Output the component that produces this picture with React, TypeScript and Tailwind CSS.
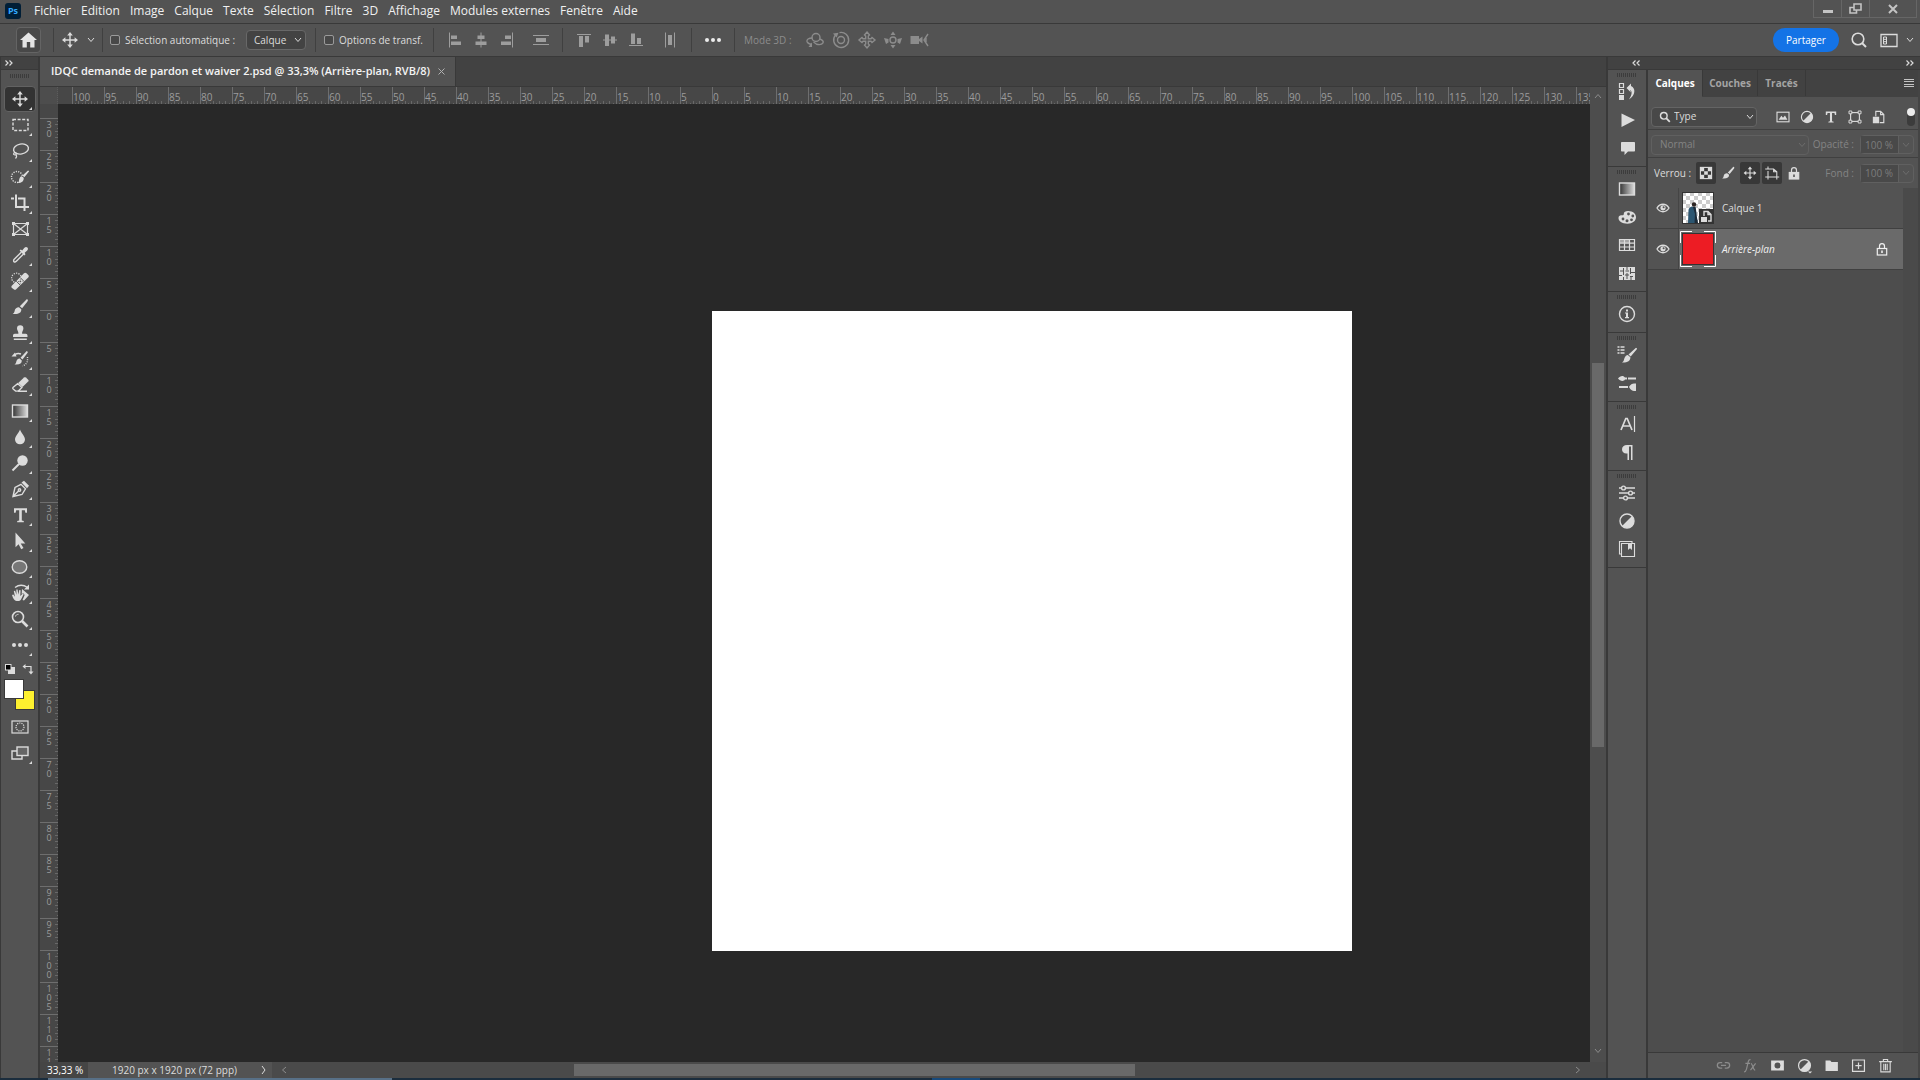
import React from "react";

type IconProps = { children: React.ReactNode; size?: number; className?: string };

const Icon = ({ children, size = 20, className = "" }: IconProps) => (
  <svg
    width={size}
    height={size}
    viewBox="0 0 20 20"
    fill="none"
    stroke="currentColor"
    strokeWidth="1.4"
    className={`shrink-0 ${className}`}
    aria-hidden="true"
  >
    {children}
  </svg>
);

const solid = { fill: "currentColor", stroke: "none" };

const Chevron = ({ className = "" }: { className?: string }) => (
  <svg width="8" height="6" viewBox="0 0 8 6" fill="none" stroke="currentColor" className={`shrink-0 ${className}`} aria-hidden="true">
    <path d="M1 1l3 3.5L7 1" />
  </svg>
);

const Grip = () => (
  <svg width="20" height="4" viewBox="0 0 20 4" className="shrink-0 text-[#3c3c3c]" stroke="currentColor" aria-hidden="true">
    <path d="M.5 0v4M2.5 0v4M4.5 0v4M6.5 0v4M8.5 0v4M10.5 0v4M12.5 0v4M14.5 0v4M16.5 0v4M18.5 0v4" />
  </svg>
);

const DoubleChevron = ({ flip = false }: { flip?: boolean }) => (
  <svg width="8" height="6" viewBox="0 0 8 6" fill="none" stroke="currentColor" className={flip ? "rotate-180" : ""} aria-hidden="true">
    <path d="M.5.5L3 3 .5 5.5M4.5.5L7 3 4.5 5.5" strokeWidth="1.2" />
  </svg>
);

// ---- drawings shared by several bars ----
const moveShape = (
  <>
    <path d="M10 4v12M4 10h12" />
    <path {...solid} d="M10 2l2.8 3.4H7.2zM10 18l2.8-3.4H7.2zM2 10l3.4-2.8v5.6zM18 10l-3.4-2.8v5.6z" />
  </>
);
const brushShape = (
  <path {...solid} d="M17.5 2.5c.8.7.3 1.6-.4 2.6l-5 6.2-2.3-2 5.7-5.9c.7-.7 1.4-1.4 2-.9zM9 10.2l2.3 2c.2 3.6-2.8 5.3-8.6 4.7 2-1 1.600-2.300 2.300-4.300C5.700 10.900 7.300 10 9 10.200z" />
);
const gradientShape = (id: string) => (
  <>
    <defs>
      <linearGradient id={id}>
        <stop offset="0" stopColor="#333" />
        <stop offset="1" stopColor="#ddd" />
      </linearGradient>
    </defs>
    <rect x="2.5" y="4" width="15" height="12" fill={`url(#${id})`} />
  </>
);
const halfCircle = (
  <>
    <circle cx="10" cy="10" r="7" />
    <path {...solid} d="M15 5a7 7 0 0 1-10 10z" />
  </>
);
const serifT = <path {...solid} d="M3.500 3h13v4.500h-1.600l-.6-2.500h-3v10.300l2 .5V17H6.700v-1.200l2-.5V5h-3l-.6 2.500H3.500z" />;

const tools: { name: string; shape: React.ReactNode; plain?: boolean }[] = [
  { name: "Déplacement", shape: moveShape },
  { name: "Rectangle de sélection", shape: <rect x="3" y="4.500" width="15" height="11" strokeDasharray="3 1.600" /> },
  {
    name: "Lasso",
    shape: (
      <>
        <ellipse cx="11" cy="8" rx="7.500" ry="5" transform="rotate(-10 11 8)" />
        <path d="M5 11.500c-2 .5-1.800 2.500 0 2.400 2-.1 1.800-2.400 0-2.400M6 13.500c1 1.500.5 3-.5 4" strokeWidth="1.200" />
      </>
    ),
  },
  {
    name: "Sélection rapide",
    shape: (
      <>
        <circle cx="7" cy="10" r="5.500" strokeDasharray="1.200 1.200" />
        <path {...solid} d="M19 4l-1-.5-5.500 5 1.800 1.700L19 4.500zM11.800 9.300l1.900 1.700c.3 3-2 5-6.200 5 1.800-1 1.300-2.500 1.800-4 .4-1.600 1.300-2.500 2.500-2.700z" />
      </>
    ),
  },
  { name: "Recadrage", shape: <path d="M6 1.500V14h10M1 5.500h3M8 5.500h6.500V18M16 14h3" strokeWidth="2" /> },
  {
    name: "Image",
    plain: true,
    shape: (
      <>
        <path d="M3.500 4.500h14v11h-14zM3.500 4.500l14 11M17.500 4.500l-14 11" strokeWidth="1.200" />
        <path {...solid} d="M2 3h3v3H2zM16 3h3v3h-3zM2 14h3v3H2zM16 14h3v3h-3z" />
      </>
    ),
  },
  {
    name: "Pipette",
    shape: (
      <>
        <path d="M11.500 7L4.200 14.300c-.8.8-.7 2-.2 2.400.5.5 1.600.4 2.300-.4L13.500 9" />
        <path {...solid} d="M9.600 5.600l1.200-1 1.400.8 2-2.400c1.200-1.300 2.400-1.200 3.200-.4s.9 2-.4 3.200l-2.300 2 .8 1.500-1.200 1.200z" />
      </>
    ),
  },
  {
    name: "Correcteur localisé",
    shape: (
      <>
        <circle cx="6.500" cy="7" r="4.800" strokeDasharray="1.200 1.200" strokeWidth="1.200" />
        <path {...solid} d="M2 14.500l12-12.300c.8-.7 1.700-.7 2.500 0l1.700 1.700c.8.800.8 1.700 0 2.500l-12 11.800c-.8.800-1.700.8-2.500 0L2 17c-.8-.8-.8-1.700 0-2.500z" />
        <path d="M6.300 10.200l4.300 4.300M10 6.400l4.300 4.300" stroke="#535353" strokeWidth="1" />
        <path d="M10.300 8.500v4M8.300 10.500h4" stroke="#535353" strokeWidth="1" strokeDasharray="1 .8" />
      </>
    ),
  },
  { name: "Pinceau", shape: brushShape },
  {
    name: "Tampon de duplication",
    shape: <path {...solid} d="M7 5.500a3.200 3.200 0 1 1 6.400 0c0 2-1.600 2.700-1.300 5.300h3.600c1.200 0 1.800.7 1.800 2v1.200H3v-1.200c0-1.300.6-2 1.800-2h3.600C8.700 8.200 7 7.500 7 5.500zM3.800 15.500h13V17h-13z" />,
  },
  {
    name: "Forme d'historique",
    shape: (
      <>
        <path {...solid} d="M17.500 2.500l-.8-.5-6.200 6.700 2 1.800 5.300-7zM9.700 9.500l2.100 2c.2 3-2.300 4.500-7.300 4 1.600-.8 1.500-2 2-3.500.5-1.600 1.700-2.600 3.200-2.500zM1.500 7.500L5 3.500l1.500 4z" />
        <path d="M5 5.500c2-1.300 4-1.300 6-.5" />
        <path d="M17.500 8v3c0 2.500-2 5-5 6" strokeDasharray="1 1.200" />
      </>
    ),
  },
  {
    name: "Gomme",
    shape: (
      <>
        <path {...solid} d="M8.200 8L14 2.500c.6-.5 1.300-.5 1.900 0l2.300 2.200c.6.600.6 1.300 0 1.900L12.500 12z" />
        <path d="M7.600 8.600l4.300 4-3 2.900c-.5.500-1 .6-1.700.6H5.600L3.200 14c-.6-.6-.6-1.300 0-1.800zM8 16.300h9" />
      </>
    ),
  },
  { name: "Dégradé", shape: gradientShape("toolGrad") },
  { name: "Goutte d'eau", shape: <path {...solid} d="M10 2.500c1 3.500 5 6.500 5 10a5 4.800 0 0 1-10 0c0-3.500 4-6.500 5-10z" /> },
  {
    name: "Densité -",
    shape: (
      <>
        <circle {...solid} cx="12.500" cy="7.500" r="5.200" />
        <path d="M9 11l-6.500 6.500" strokeWidth="2" />
      </>
    ),
  },
  {
    name: "Plume",
    shape: (
      <>
        <path d="M3 17.500l2-9 6-3.200 4.500 4.500-3.500 5.700zM3.500 17l5.500-5.500" />
        <circle cx="9.500" cy="11" r="1.200" />
        <path {...solid} d="M11.500 3.500l2.500-1.700 5 5L17 9.300z" />
      </>
    ),
  },
  { name: "Texte horizontal", shape: <g transform="translate(.5 .3)">{serifT}</g> },
  { name: "Sélection de tracé", shape: <path {...solid} d="M5.500 1.500l9.800 11h-4.600l2.800 4.600-2.300 1.100-2.600-4.900-3.100 3z" /> },
  { name: "Ellipse", shape: <ellipse cx="9.500" cy="10" rx="7.300" ry="6.300" fill="#777" /> },
  {
    name: "Rotation de l'affichage",
    shape: (
      <>
        <path {...solid} d="M6.500 18c-2 0-3.500-2.500-4.500-6l1.300-.5L5 13.700 3.800 8l1.300-.3 1.400 4-.2-5.200h1.300l.7 5 1-4.500 1.300.2-.3 5.800 1.700-1.800c1-.8 1.800-.3 1.500.4L11 16.500c-.7 1-1.800 1.500-3 1.500z" />
        <path {...solid} d="M12 6l7 6-5 5.500-1.500-.6 2-4.500c0-2-1.500-2.300-2.800-1.400z" />
        <path d="M5 4.500c4-3 9-2.500 12.500 0" />
        <path {...solid} d="M19 1.500v5h-5z" />
      </>
    ),
  },
  {
    name: "Zoom",
    shape: (
      <>
        <circle cx="8" cy="8" r="5.500" strokeWidth="1.600" />
        <path d="M5.500 7.500C5.800 6 7 5.300 8.500 5.300" strokeWidth="1" />
        <path d="M12 12l5.500 5.500" strokeWidth="2.600" />
      </>
    ),
  },
  {
    name: "Modifier la barre d'outils",
    shape: (
      <g {...solid}>
        <circle cx="4" cy="10" r="2" />
        <circle cx="10" cy="10" r="2" />
        <circle cx="16" cy="10" r="2" />
      </g>
    ),
  },
];

const ToolButton = ({ name, active, plain, children }: { name: string; active?: boolean; plain?: boolean; children: React.ReactNode }) => (
  <button
    type="button"
    aria-label={name}
    className={`flex h-[26px] w-8 shrink-0 items-center justify-center rounded-sm text-[#dcdcdc] ${
      active ? "border border-[#626262] bg-[#333]" : ""
    }`}
  >
    <span className="relative flex">
      <Icon>{children}</Icon>
      {!plain && (
        <svg width="3" height="3" viewBox="0 0 3 3" className="absolute -right-0.5 -bottom-px" aria-hidden="true">
          <path d="M3 0v3H0z" fill="currentColor" />
        </svg>
      )}
    </span>
  </button>
);

const Toolbox = () => (
  <aside className="flex w-10 shrink-0 flex-col border-r-2 border-l border-[#393939] bg-[#535353]">
    <div className="flex h-[13px] shrink-0 items-center border-b border-[#393939] bg-[#424242] pl-1 text-[#dcdcdc]">
      <DoubleChevron />
    </div>
    <div className="flex h-4 shrink-0 items-start justify-center pt-1">
      <Grip />
    </div>
    <div className="flex flex-col items-center">
      {tools.map((tool, i) => (
        <ToolButton key={tool.name} name={tool.name} active={i === 0} plain={tool.plain}>
          {tool.shape}
        </ToolButton>
      ))}
    </div>
    <div className="flex h-[21px] shrink-0 items-center justify-between pr-1 pl-[3px] text-[#dcdcdc]">
      <button type="button" aria-label="Couleurs par défaut">
        <svg width="12" height="12" viewBox="0 0 12 12">
          <rect x="4" y="4" width="7" height="7" fill="#dcdcdc" />
          <rect x="1.500" y="1.500" width="5.500" height="5.500" fill="#000" stroke="#dcdcdc" />
        </svg>
      </button>
      <button type="button" aria-label="Permuter les couleurs">
        <svg width="12" height="12" viewBox="0 0 12 12" fill="none" stroke="currentColor" strokeWidth="1.200">
          <path d="M3 3.500h6v6" />
          <path d="M3.500 1v5L.5 3.500zM6.500 8.500h5L9 11.500z" fill="currentColor" stroke="none" />
        </svg>
      </button>
    </div>
    <div className="relative h-[35px] shrink-0">
      <button type="button" aria-label="Couleur d'arrière-plan" className="absolute top-[11px] left-3.5 h-5 w-5 border border-[#393939] bg-[#fdf02f]" />
      <button type="button" aria-label="Couleur de premier plan" className="absolute top-0 left-[3px] h-5 w-5 border border-[#393939] bg-white" />
    </div>
    <div className="flex flex-col items-center">
      <ToolButton name="Mode masque" plain>
        <rect x="2" y="4" width="16" height="12" strokeWidth="1.200" />
        <circle cx="10" cy="10" r="4" strokeDasharray="1.200 1" strokeWidth="1.200" />
      </ToolButton>
      <ToolButton name="Mode d'écran">
        <path d="M7 8H2v8h10v-3" />
        <rect x="7" y="4" width="11" height="8.500" fill="#666" />
      </ToolButton>
    </div>
  </aside>
);

const menus = ["Fichier", "Edition", "Image", "Calque", "Texte", "Sélection", "Filtre", "3D", "Affichage", "Modules externes", "Fenêtre", "Aide"];

const MenuBar = () => (
  <header className="flex h-6 shrink-0 items-start border-b border-[#393939] bg-[#535353] pl-[5px]">
    <div className="mt-[3px] flex h-4 w-4 items-center justify-center rounded-[3px] bg-[#001e36] text-[9px] font-bold text-[#31a8ff]">Ps</div>
    <nav className="ml-2 flex h-[22px] items-center text-[12px] text-[#f0f0f0]">
      {menus.map((m) => (
        <button type="button" key={m} className="px-[5px]">
          {m}
        </button>
      ))}
    </nav>
    <div className="mr-[3px] ml-auto flex h-[18px] divide-x divide-[#666] border-x border-b border-[#666] text-[#c4c4c4]">
      <button type="button" aria-label="Réduire" className="flex w-7 items-center justify-center">
        <svg width="12" height="12" viewBox="0 0 12 12"><path d="M1 7h10v3H1z" fill="currentColor" /></svg>
      </button>
      <button type="button" aria-label="Restaurer" className="flex w-7 items-center justify-center">
        <svg width="13" height="11" viewBox="0 0 13 11" fill="none" stroke="currentColor" strokeWidth="1.600">
          <path d="M5 1h7v6H5zM5 4.500H1V10h6.500V7" />
        </svg>
      </button>
      <button type="button" aria-label="Fermer" className="flex w-[46px] items-center justify-center">
        <svg width="10" height="10" viewBox="0 0 10 10" stroke="currentColor" strokeWidth="2"><path d="M1 1l8 8M9 1L1 9" /></svg>
      </button>
    </div>
  </header>
);

const Separator = () => <div className="h-6 w-px shrink-0 bg-[#404040]" />;

const BarButton = ({ name, children }: { name: string; children: React.ReactNode }) => (
  <button type="button" aria-label={name} className="flex h-6 w-[26px] shrink-0 items-center justify-center">
    <Icon>{children}</Icon>
  </button>
);

const OptionsBar = () => (
  <div className="flex h-[33px] shrink-0 items-center border-b border-[#393939] bg-[#535353] pr-0.5 pl-4 text-[10px] text-[#dcdcdc]">
    <button type="button" aria-label="Accueil" className="flex h-[26px] w-[25px] items-center justify-center rounded-sm border border-[#646464] bg-[#484848]">
      <svg width="17" height="16" viewBox="0 0 17 16" fill="#e4e4e4"><path d="M8.500.5L17 8h-2.500v7.500h-4.300V10H6.800v5.500H2.500V8H0z" /></svg>
    </button>
    <div className="w-3" />
    <Separator />
    <button type="button" aria-label="Outil actif" className="flex h-6 w-12 items-center gap-[7px] pl-1.5">
      <Icon>{moveShape}</Icon>
      <Chevron />
    </button>
    <Separator />
    <label className="ml-[7px] flex w-[136px] items-center gap-[5px] whitespace-nowrap">
      <input type="checkbox" className="h-2.5 w-2.5 shrink-0 appearance-none rounded-xs border border-[#9a9a9a] bg-[#484848]" />
      Sélection automatique :
    </label>
    <div className="relative flex items-center">
      <select aria-label="Sélection automatique" className="h-5 w-[60px] appearance-none rounded-sm border border-[#686868] bg-[#434343] pl-[7px]">
        <option>Calque</option>
      </select>
      <Chevron className="pointer-events-none absolute right-1" />
    </div>
    <div className="w-[9px]" />
    <Separator />
    <label className="ml-2 flex w-[109px] items-center gap-[5px] whitespace-nowrap">
      <input type="checkbox" className="h-2.5 w-2.5 shrink-0 appearance-none rounded-xs border border-[#9a9a9a] bg-[#484848]" />
      Options de transf.
    </label>
    <Separator />
    <div className="ml-2 flex items-center text-[#9d9d9d]">
      <BarButton name="Aligner à gauche">
        <path d="M4.500 2.500v15" strokeWidth="1" />
        <path {...solid} d="M6 5.500h6v3.500H6zM6 11.500h10v3.500H6z" />
      </BarButton>
      <BarButton name="Centrer horizontalement">
        <path d="M10 2.500v15" strokeWidth="1" />
        <path {...solid} d="M6.500 5.500h7V9h-7zM4.500 11.500h11V15h-11z" />
      </BarButton>
      <BarButton name="Aligner à droite">
        <path d="M15.500 2.500v15" strokeWidth="1" />
        <path {...solid} d="M8 5.500h6V9H8zM4 11.500h10V15H4z" />
      </BarButton>
      <div className="w-2" />
      <BarButton name="Répartir verticalement">
        <path d="M2 5.500h16M2 14.500h16" strokeWidth="1" />
        <path {...solid} d="M5 8h10v4H5z" />
      </BarButton>
    </div>
    <div className="w-2" />
    <Separator />
    <div className="ml-2 flex items-center text-[#9d9d9d]">
      <BarButton name="Aligner en haut">
        <path d="M3 4.500h14" strokeWidth="1" />
        <path {...solid} d="M5 6h4v11H5zM11 6h4v6.500h-4z" />
      </BarButton>
      <BarButton name="Centrer verticalement">
        <path d="M3 10h14" strokeWidth="1" />
        <path {...solid} d="M5 4.500h4v11.500H5zM11 6.500h4v7h-4z" />
      </BarButton>
      <BarButton name="Aligner en bas">
        <path d="M3 15.500h14" strokeWidth="1" />
        <path {...solid} d="M5 3.500h4V14H5zM11 8h4v6h-4z" />
      </BarButton>
      <div className="w-2" />
      <BarButton name="Répartir horizontalement">
        <path d="M5.500 2.500v15M14.500 2.500v15" strokeWidth="1" />
        <path {...solid} d="M8 5h4v10H8z" />
      </BarButton>
    </div>
    <div className="w-2" />
    <Separator />
    <div className="mx-2 flex text-[#ececec]">
      <BarButton name="Aligner et répartir">
        <g {...solid}>
          <circle cx="4" cy="10" r="2" />
          <circle cx="10" cy="10" r="2" />
          <circle cx="16" cy="10" r="2" />
        </g>
      </BarButton>
    </div>
    <Separator />
    <span className="ml-[9px] w-[58px] whitespace-nowrap text-[#8c8c8c]">Mode 3D :</span>
    <div className="flex text-[#8c8c8c]">
      <BarButton name="Rotation 3D">
        <circle cx="11" cy="7.500" r="4" />
        <path d="M7.500 8C3.500 8 1.500 9.500 2 11.500c.5 1.500 2.500 2.500 5 3M15 9c2.500 1 3.800 2.500 3 3.800-1 1.800-4 2-6.500 1.400l-3-2.200" />
        <path {...solid} d="M7 12.500v4.500H3.500z" />
      </BarButton>
      <BarButton name="Roulement 3D">
        <circle cx="10" cy="10" r="3.500" />
        <path d="M4.500 5a7.500 7.500 0 1 0 4-2.400" />
        <path {...solid} d="M2 3.500l5.500-.8-1.800 4.800z" />
      </BarButton>
      <BarButton name="Panoramique 3D">
        <path d="M10 2l2.500 3-1.200 1v2.700H14l1-1.200 3 2.500-3 2.500-1-1.200h-2.700V14l1.200 1L10 18l-2.500-3 1.200-1v-2.700H6L5 12.500 2 10l3-2.500 1 1.200h2.700V6L7.500 5z" />
      </BarButton>
      <BarButton name="Glissement 3D">
        <circle cx="10" cy="10" r="3" />
        <path {...solid} d="M10 1.500l2.500 3.500h-5zM10 18.500L7.500 15h5zM1 8l4.500 1v3.500L3 14zM19 8l-4.500 1v3.500L17 14z" />
      </BarButton>
      <BarButton name="Zoom 3D">
        <path {...solid} d="M1.500 6H10v3l3.500-2.500v7L10 11v3H1.500z" />
        <path d="M19 4l-4 6 4 6M17 8v4" />
      </BarButton>
    </div>
    <button type="button" className="ml-auto h-6 w-[66px] rounded-full bg-[#1473e6] text-white">
      Partager
    </button>
    <div className="ml-[7px] flex gap-1">
      <BarButton name="Rechercher">
        <circle cx="9" cy="9" r="5.800" strokeWidth="1.600" />
        <path d="M13 13l4 4" strokeWidth="2" />
      </BarButton>
      <BarButton name="Espace de travail">
        <path d="M2 4.500h16v12H2z" strokeWidth="1.300" />
        <path d="M4.500 7h3v7h-3zM4.500 9.300h3M4.500 11.700h3" strokeWidth="1" />
      </BarButton>
    </div>
    <Chevron className="mx-1" />
  </div>
);

// one label every 5 cm, 32px apart
const topMarks = Array.from({ length: 48 }, (_, i) => Math.abs(100 - i * 5));
const sideMarks = Array.from({ length: 30 }, (_, i) => Math.abs(30 - i * 5));

const TopRuler = () => (
  <div className="flex h-[17px] min-w-0 flex-1 overflow-hidden bg-[#474747] pl-3.5">
    {topMarks.map((mark, i) => (
      <div key={i} className="relative w-8 shrink-0 border-l border-[#6e6e6e] pt-1 text-[10px] leading-3 text-[#9c9c9c]">
        {mark}
        <svg width="31" height="4" viewBox="0 0 31 4" className="absolute bottom-0 left-0 text-[#686868]" stroke="currentColor" aria-hidden="true">
          <path d="M5.500 1v3M12.500 1v3M18.500 1v3M24.500 1v3M2.500 3v1M9.500 3v1M15.500 3v1M21.500 3v1M28.500 3v1" />
        </svg>
      </div>
    ))}
  </div>
);

const SideRuler = () => (
  <div className="w-[18px] shrink-0 overflow-hidden bg-[#474747] pt-3.5">
    {sideMarks.map((mark, i) => (
      <div key={i} className="relative flex h-8 flex-col items-center border-t border-[#6e6e6e] pt-px text-[9px] leading-[9px] text-[#9c9c9c]">
        {String(mark).split("").map((digit, n) => (
          <span key={n}>{digit}</span>
        ))}
        <svg width="3" height="31" viewBox="0 0 3 31" className="absolute top-0 right-0 text-[#686868]" stroke="currentColor" aria-hidden="true">
          <path d="M0 5.500h3M0 12.500h3M0 18.500h3M0 24.500h3M2 2.500h1M2 9.500h1M2 15.500h1M2 21.500h1M2 28.500h1" />
        </svg>
      </div>
    ))}
  </div>
);

const DocumentWindow = () => (
  <main className="flex min-w-0 flex-1 flex-col">
    <div className="flex h-[30px] shrink-0 border-b border-[#393939] bg-[#424242]">
      <div className="flex items-center gap-2 border-r border-[#393939] bg-[#535353] pr-2.5 pl-[11px] text-[11px] font-semibold whitespace-nowrap text-[#f4f4f4]">
        IDQC demande de pardon et waiver 2.psd @ 33,3% (Arrière-plan, RVB/8)
        <button type="button" aria-label="Fermer le document">
          <svg width="7" height="7" viewBox="0 0 7 7" stroke="#b0b0b0" aria-hidden="true"><path d="M.5.5l6 6M6.500.5l-6 6" /></svg>
        </button>
      </div>
    </div>
    <div className="flex min-h-0 flex-1">
      <div className="flex min-w-0 flex-1 flex-col">
        <div className="flex shrink-0">
          <div className="h-[17px] w-[18px] shrink-0 border-r border-dotted border-[#5c5c5c] bg-[#4d4d4d]" />
          <TopRuler />
        </div>
        <div className="flex min-h-0 flex-1">
          <SideRuler />
          <div className="min-w-0 flex-1 overflow-hidden bg-[#282828] pt-[207px] pl-[654px]">
            <div className="h-[640px] w-[640px] bg-white" />
          </div>
        </div>
      </div>
      <div className="flex w-4 shrink-0 flex-col items-center bg-[#4d4d4d] text-[#8c8c8c]">
        <Chevron className="mt-1.5 rotate-180" />
        <div className="w-3 flex-[264]" />
        <div className="w-3 flex-[384] bg-[#696969]" />
        <div className="w-3 flex-[301]" />
        <Chevron className="mb-2" />
      </div>
    </div>
    <footer className="flex h-4 shrink-0 items-center bg-[#4a4a4a] text-[10px] text-[#dcdcdc]">
      <input aria-label="Zoom" defaultValue="33,33 %" className="h-4 w-12 bg-[#454545] pl-[7px] text-white" />
      <div className="flex h-4 w-[184px] items-center justify-between bg-[#535353] pr-1.5 pl-6">
        <span>1920 px x 1920 px (72 ppp)</span>
        <svg width="5" height="10" viewBox="0 0 5 10" fill="none" stroke="currentColor"><path d="M1 1l3 4-3 4" /></svg>
      </div>
      <div className="flex h-4 flex-1 items-center pr-6 pl-2 text-[#8c8c8c]">
        <Chevron className="rotate-90" />
        <div className="flex-[286]" />
        <div className="h-3 flex-[561] bg-[#696969]" />
        <div className="flex-[439]" />
        <Chevron className="-rotate-90" />
      </div>
    </footer>
  </main>
);

const dockGroups: { name: string; shape: React.ReactNode }[][] = [
  [
    {
      name: "Historique",
      shape: (
        <>
          <path d="M2.500 1.500h4v4h-4zM2.500 7.500h4v4h-4z" strokeWidth="1.200" />
          <path {...solid} d="M2 13h5v5H2zM9.500 6L14 1.500V4c5 2 4.500 9.500-2 13.500 3-4.500 3.500-8.500 1-9.500l1 2.500z" />
        </>
      ),
    },
    { name: "Scripts", shape: <path {...solid} d="M4.500 3.500L18 10 4.500 17z" /> },
    { name: "Commentaires", shape: <path {...solid} d="M5 4h12c.6 0 1 .4 1 1v7.500c0 .6-.4 1-1 1H11L7.500 17v-3.500H5c-.6 0-1-.4-1-1V5c0-.6.4-1 1-1z" /> },
  ],
  [
    { name: "Dégradés", shape: gradientShape("dockGrad") },
    {
      name: "Couleur",
      shape: (
        <>
          <path {...solid} d="M11 4c5 0 8 2.800 8 6.300 0 3.700-3.500 6.400-8.500 6.400C5 16.700 1.500 14.300 1.500 11c0-2 1.500-3 3-2.800 1.700.3 2.300-.3 2.300-1.500C6.800 5 8.500 4 11 4z" />
          <g fill="#535353" stroke="none">
            <circle cx="6" cy="12" r="1.400" /><circle cx="10" cy="13.800" r="1.500" /><circle cx="14.500" cy="12.800" r="1.400" />
            <circle cx="15.800" cy="9" r="1.400" /><circle cx="11.500" cy="7" r="1.400" />
          </g>
        </>
      ),
    },
    { name: "Nuancier", shape: <><path {...solid} d="M2 4h5v4H2zM7 4h5v4H7z" opacity=".6" /><path d="M2.500 4.500h15v11h-15zM2.500 8.200h15M2.500 12h15M7.500 4.500v11M12.500 4.500v11" strokeWidth="1.200" /></> },
    { name: "Motifs", shape: <><path {...solid} d="M2 4h16v13H2z" /><path d="M6.500 5v7M10 4v3M13.500 5v6M10 10v6M6.500 14v3M14 13v4M3 8h4M8.500 8H12M13 9.500h5M2 12.500h3M8 12h4M13 13.500h3" stroke="#535353" strokeWidth="1" /></> },
  ],
  [{ name: "Informations", shape: <><circle cx="10" cy="10" r="7.500" /><path {...solid} d="M9 5.500h2v2H9zM8 8.500h3V13h1v1.200H8V13h1V9.600H8z" /></> }],
  [
    {
      name: "Paramètres de forme",
      shape: (
        <>
          <path {...solid} d="M20 3.500l-1-.8-7.500 6.800 2.200 2 6.300-7.500zM10.800 10l2.600 2.200c0 3.500-2.700 5.500-8.400 5.300 2.200-1.200 1.700-2.700 2.500-4.500.8-1.800 2-2.900 3.300-3z" />
          <path d="M.5 2h2M.5 5h2M.5 8h2M3.500 2h4M3.500 5h4M3.500 8h4" strokeWidth="1.600" />
        </>
      ),
    },
    {
      name: "Formes",
      shape: <path {...solid} d="M1 5.500c2-3 5.500-3.500 7-1h2v2H8c-1.500 2.500-5 1.500-7-1zM11 4.500h8v2h-8zM2 13h9v2H2zM12 14c1-1 1.500-3 5-3.500 1-.2 2 0 2 0v7.500s-1 .2-2 0c-3.500-.6-4-2.800-5-4z" />,
    },
  ],
  [
    { name: "Caractère", shape: <><path d="M4 16L8.800 4.500h1.400L15 16M5.700 12h7.600" strokeWidth="1.700" /><path d="M17.500 2v16" strokeWidth="1.200" /></> },
    { name: "Paragraphe", shape: <path {...solid} d="M15.500 3v15H14V4.500h-2V18h-1.500v-6.500C7 12 5 10 5 7.300 5 4.800 7 3 10 3z" /> },
  ],
  [
    {
      name: "Propriétés",
      shape: (
        <>
          <path d="M2 5h2.500M8.500 5H18M2 10h9.500M15.500 10H18M2 15h4.500M10.500 15H18" />
          <circle cx="6.500" cy="5" r="1.900" /><circle cx="13.500" cy="10" r="1.900" /><circle cx="8.500" cy="15" r="1.900" />
        </>
      ),
    },
    { name: "Réglages", shape: halfCircle },
    { name: "Bibliothèques", shape: <><path d="M4.500 4.500h13v13h-13zM15 4.500v-2H2.500V15h2" strokeWidth="1.100" /><path {...solid} d="M11 5h4v6l-2-1.800L11 11z" /></> },
  ],
];

const IconDock = () => (
  <div className="flex w-[42px] shrink-0 flex-col border-x-2 border-[#393939] bg-[#535353]">
    {dockGroups.map((group, i) => (
      <div key={i} className="flex flex-col items-center border-b border-[#393939] pt-[3px] pb-1">
        <Grip />
        <div className="h-px" />
        {group.map((item) => (
          <button type="button" key={item.name} aria-label={item.name} className="flex h-7 w-8 items-center justify-center text-[#dcdcdc]">
            <Icon>{item.shape}</Icon>
          </button>
        ))}
      </div>
    ))}
  </div>
);

const Eye = () => (
  <svg width="14" height="10" viewBox="0 0 14 10" aria-hidden="true">
    <path d="M1 5c3-5 9-5 12 0-3 5-9 5-12 0z" fill="none" stroke="#dcdcdc" strokeWidth="1.300" />
    <circle cx="7" cy="4.800" r="2.600" fill="#dcdcdc" />
    <circle cx="7.600" cy="4.200" r="1" fill="#535353" />
  </svg>
);

const smartObject = <path d="M6 9V3h6l4 4v10h-5M12 3v4h4M3 10.500h6.500V17H3z" />;

const LayerThumb = () => (
  <svg width="32" height="32" viewBox="0 0 32 32" aria-hidden="true">
    <defs>
      <pattern id="checker" width="8" height="8" patternUnits="userSpaceOnUse">
        <path d="M0 0h8v8H0z" fill="#fff" />
        <path d="M0 0h4v4H0zM4 4h4v4H4z" fill="#ccc" />
      </pattern>
    </defs>
    <rect x=".5" y=".5" width="31" height="31" fill="url(#checker)" stroke="#333" />
    <path d="M6 31l.5-13c.3-2 1.500-3 3.500-3.500l3 .5c1.500 2 1.500 6 1.300 9l1.200 5-3 2z" fill="#2b5570" />
    <path d="M11 15l2 7-.5 9H16l-1.500-8-1-8z" fill="#1b2a38" />
    <circle cx="12" cy="12.500" r="2.200" fill="#2d2523" />
    <path d="M17 17h15v15H17z" fill="#333" />
    <path d="M22 24v-4.500h4l3 3V29h-3M26 19.500v3h3" fill="none" stroke="#dcdcdc" strokeWidth="1.400" />
    <path d="M19 25h6v5h-6z" fill="#dcdcdc" />
  </svg>
);

const RedThumb = () => (
  <svg width="36" height="36" viewBox="0 0 36 36" fill="none" aria-hidden="true">
    <rect x="2.500" y="2.500" width="31" height="31" fill="#ed1c24" stroke="#333" />
    <path d="M.5 12V.5H12M24 .5h11.500V12M35.500 24v11.500H24M12 35.500H.5V24" stroke="#fff" />
  </svg>
);

const LockGlyph = ({ filled = false }: { filled?: boolean }) => (
  <svg width="12" height="13" viewBox="0 0 12 13" fill="none" stroke="currentColor" strokeWidth="1.200" aria-hidden="true">
    <path d="M3.500 5.500V3.200a2.500 2.500 0 0 1 5 0v2.300" />
    <rect x="1.300" y="5.500" width="9.400" height="6.500" fill={filled ? "currentColor" : "none"} />
    <path d="M6 7.500v2.500" stroke={filled ? "#535353" : "currentColor"} strokeWidth="1.600" />
  </svg>
);

const PercentField = ({ label }: { label: string }) => (
  <label className="ml-auto flex items-center gap-1.5 whitespace-nowrap text-[#848484]">
    {label} :
    <span className="flex h-[19px] w-[54px] items-center rounded-sm border border-[#606060]">
      <input disabled defaultValue="100 %" className="h-[17px] w-[38px] border-r border-[#606060] bg-[#494949] pl-1 text-[#7c7c7c]" />
      <Chevron className="mx-auto text-[#6c6c6c]" />
    </span>
  </label>
);

const lockOptions = [
  { name: "Pixels transparents", on: true, shape: <><rect x="3" y="3" width="14" height="14" /><path {...solid} d="M3 3h4.700v4.700H3zM12.300 3H17v4.700h-4.700zM7.700 7.700h4.600v4.600H7.700zM3 12.300h4.700V17H3zM12.300 12.300H17V17h-4.700z" /></> },
  { name: "Pixels de l'image", on: false, shape: brushShape },
  { name: "Position", on: true, shape: moveShape },
  { name: "Plan de travail", on: true, shape: <path d="M5 2v3M1.500 5H12l4 3.500V15H5V7.500M12 5v3.500h4M16 15v3M16 15h3M1.500 15H5v3" strokeWidth="1.300" /> },
];

const filterOptions = [
  { name: "Pixels", shape: <><rect x="2.500" y="4" width="15" height="12" /><path {...solid} d="M4.500 13.500L8 8.500l2 2.500 2.500-3 3 5.500z" /></> },
  { name: "Réglages", shape: halfCircle },
  { name: "Texte", shape: serifT },
  { name: "Formes", shape: <><rect x="4.500" y="4.500" width="11" height="11" /><path fill="#535353" strokeWidth="1.200" d="M2.500 2.500h3.500V6H2.500zM14 2.500h3.500V6H14zM2.500 14H6v3.500H2.500zM14 14h3.500v3.500H14z" /></> },
  { name: "Objets dynamiques", shape: <>{smartObject}<path {...solid} d="M3 10.500h6.500V17H3z" /></> },
];

const footerOptions = [
  { name: "Lier", dim: true, shape: <path d="M8.500 13H6a3 3 0 0 1 0-6.500h2.500M11.500 6.500H14a3 3 0 0 1 0 6.500h-2.500M7 9.800h6" strokeWidth="1.500" /> },
  { name: "Style", dim: true, shape: <path d="M2.500 17.500c2 0 2.200-1 2.700-3L7.500 5c.4-1.500 1-2.200 2.500-2M4 7.500h5.500M10.500 7.500c2 0 2.500 8 5 8M16 7.500l-6 8" /> },
  { name: "Masque", dim: false, shape: <path {...solid} fillRule="evenodd" d="M2.500 4h15v12h-15zM10 6.500a3.500 3.500 0 1 0 0 7 3.500 3.500 0 0 0 0-7z" /> },
  { name: "Calque de réglage", dim: false, shape: <>{halfCircle}<path {...solid} d="M14 17h5l-2.500 2.500z" /></> },
  { name: "Groupe", dim: false, shape: <path {...solid} d="M3 4h5.500l1.500 2h7.500v10.500H3z" /> },
  { name: "Nouveau calque", dim: false, shape: <path d="M3 3.500h14v13.500H3zM10 6.500v7.500M6.300 10.200h7.400" /> },
  { name: "Supprimer", dim: false, shape: <path d="M2.500 5.500h15M7.500 5V3h5v2M4.500 6v11.500h11V6M8 8v7.500M10 8v7.500M12 8v7.500" strokeWidth="1.300" /> },
];

const LayersPanel = () => (
  <section className="flex w-[272px] shrink-0 flex-col border-r-2 border-[#444] bg-[#535353] text-[10px] text-[#dcdcdc]">
    <div className="flex h-[27px] shrink-0 bg-[#424242] pb-px font-bold text-[#a4a4a4]">
      <button type="button" className="-mb-px w-[54px] bg-[#535353] text-white">Calques</button>
      <button type="button" className="w-14 border-x border-[#393939]">Couches</button>
      <button type="button" className="w-12 border-r border-[#393939]">Tracés</button>
      <button type="button" aria-label="Menu du panneau" className="mr-1 ml-auto text-[#c4c4c4]">
        <svg width="10" height="8" viewBox="0 0 10 8" stroke="currentColor"><path d="M0 .5h10M0 2.500h10M0 5.500h10M0 7.500h10" /></svg>
      </button>
    </div>
    <div className="flex h-[33px] shrink-0 items-center border-b border-[#404040] pt-[7px] pl-[3px]">
      <div className="relative flex items-center">
        <Icon size={12} className="pointer-events-none absolute left-2">
          <circle cx="8" cy="8" r="5.500" strokeWidth="2.400" />
          <path d="M12 12l6 6" strokeWidth="3" />
        </Icon>
        <select aria-label="Filtrer par" className="h-5 w-[106px] appearance-none rounded-sm border border-[#646464] bg-[#484848] pl-[22px]">
          <option>Type</option>
        </select>
        <Chevron className="pointer-events-none absolute right-[3px]" />
      </div>
      <div className="ml-3.5 flex">
        {filterOptions.map((f) => (
          <button type="button" key={f.name} aria-label={f.name} className="flex h-6 w-6 items-center justify-center">
            <Icon size={16}>{f.shape}</Icon>
          </button>
        ))}
      </div>
      <button type="button" aria-label="Activer le filtrage" className="mr-[3px] ml-auto flex h-[18px] w-2 justify-center rounded-full bg-[#3c3c3c]">
        <span className="h-2 w-2 rounded-full bg-[#ececec]" />
      </button>
    </div>
    <div className="flex h-7 shrink-0 items-center border-b border-[#404040] pt-0.5 pr-1 pl-[3px]">
      <div className="relative flex items-center text-[#848484]">
        <select aria-label="Mode de fusion" disabled className="h-5 w-[158px] appearance-none rounded-sm border border-[#606060] pl-2">
          <option>Normal</option>
        </select>
        <Chevron className="pointer-events-none absolute right-[3px] text-[#6c6c6c]" />
      </div>
      <PercentField label="Opacité" />
    </div>
    <div className="flex h-[30px] shrink-0 items-center pr-1 pl-1.5">
      <span className="w-[42px]">Verrou :</span>
      <div className="flex gap-0.5">
        {lockOptions.map((l) => (
          <button
            type="button"
            key={l.name}
            aria-label={l.name}
            className={`flex h-[22px] w-5 items-center justify-center rounded-xs ${l.on ? "bg-[#383838]" : ""}`}
          >
            <Icon size={16}>{l.shape}</Icon>
          </button>
        ))}
        <button type="button" aria-label="Tout verrouiller" className="flex h-[22px] w-5 items-center justify-center">
          <LockGlyph filled />
        </button>
      </div>
      <PercentField label="Fond" />
    </div>
    <div className="flex min-h-0 flex-1 bg-[#4d4d4d]">
      <ul className="min-w-0 flex-1">
        <li className="flex h-[41px] border-b border-[#404040] bg-[#535353]">
          <button type="button" aria-label="Visibilité Calque 1" className="flex w-[31px] items-center justify-center border-r border-[#454545]">
            <Eye />
          </button>
          <div className="flex flex-1 items-center gap-2 pl-[3px]">
            <LayerThumb />
            <span>Calque 1</span>
          </div>
        </li>
        <li className="flex h-[41px] border-b border-[#404040] bg-[#535353]">
          <button type="button" aria-label="Visibilité Arrière-plan" className="flex w-[31px] items-center justify-center border-r border-[#454545]">
            <Eye />
          </button>
          <div className="flex flex-1 items-center gap-1.5 bg-[#6a6a6a] pr-[15px] pl-px text-[#f0f0f0]">
            <RedThumb />
            <span className="italic">Arrière-plan</span>
            <span className="ml-auto"><LockGlyph /></span>
          </div>
        </li>
      </ul>
      <div className="w-[15px] bg-[#4a4a4a]" />
    </div>
    <div className="flex h-[26px] shrink-0 items-center justify-end border-t border-[#393939] pr-[19px]">
      {footerOptions.map((f) => (
        <button type="button" key={f.name} aria-label={f.name} className={`flex h-6 w-[27px] items-center justify-center ${f.dim ? "text-[#8c8c8c]" : ""}`}>
          <Icon size={17}>{f.shape}</Icon>
        </button>
      ))}
    </div>
  </section>
);

const App = () => (
  <div className="flex h-screen flex-col overflow-hidden bg-[#535353] font-['Open_Sans','Noto_Sans',sans-serif] select-none">
    <MenuBar />
    <OptionsBar />
    <div className="flex min-h-0 flex-1">
      <Toolbox />
      <DocumentWindow />
      <div className="flex shrink-0 flex-col">
        <div className="flex h-[13px] shrink-0 items-center justify-between border-b border-l-2 border-[#393939] bg-[#424242] pr-1.5 pl-6 text-[#dcdcdc]">
          <DoubleChevron flip />
          <DoubleChevron />
        </div>
        <div className="flex min-h-0 flex-1">
          <IconDock />
          <LayersPanel />
        </div>
      </div>
    </div>
    {/* top edge of the taskbar */}
    <div className="flex h-0.5 shrink-0 bg-[#1b2d3d]">
      <div className="w-12" />
      <div className="w-[344px] bg-[#587087]" />
      <div className="w-[540px]" />
      <div className="w-12 bg-[#174a7c]" />
    </div>
  </div>
);

export default App;
